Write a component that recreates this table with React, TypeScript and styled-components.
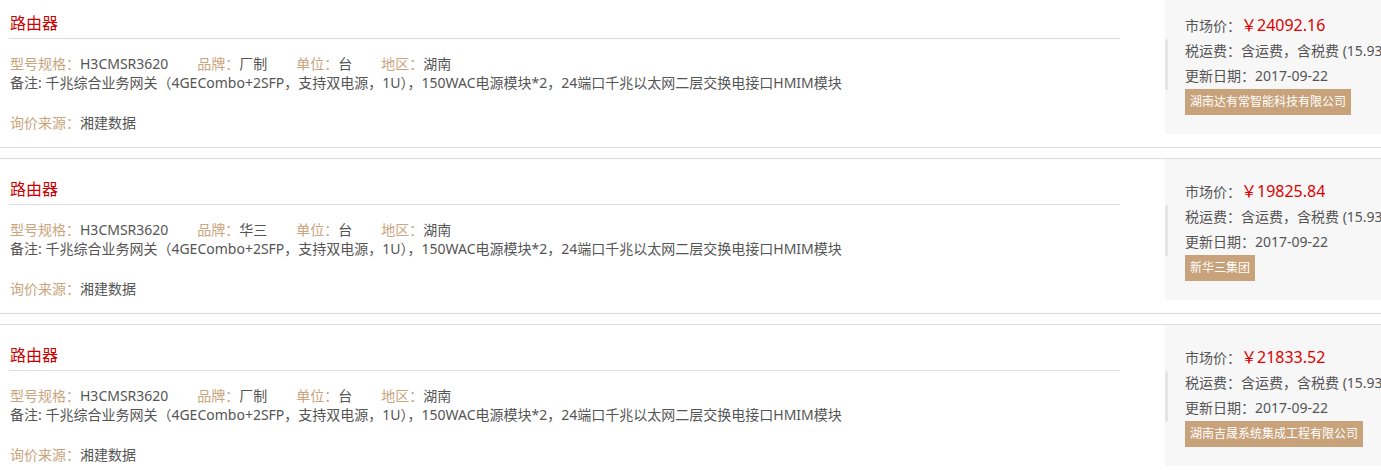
import styled, { createGlobalStyle } from "styled-components";

type Quote = {
  title: string;
  model: string;
  brand: string;
  unit: string;
  area: string;
  remark: string;
  source: string;
  price: string;
  tax: string;
  date: string;
  company: string;
};

const remark =
  "千兆综合业务网关（4GECombo+2SFP，支持双电源，1U），150WAC电源模块*2，24端口千兆以太网二层交换电接口HMIM模块";

const quotes: Quote[] = [
  {
    title: "路由器",
    model: "H3CMSR3620",
    brand: "厂制",
    unit: "台",
    area: "湖南",
    remark,
    source: "湘建数据",
    price: "24092.16",
    tax: "含运费，含税费 (15.93%)",
    date: "2017-09-22",
    company: "湖南达有常智能科技有限公司",
  },
  {
    title: "路由器",
    model: "H3CMSR3620",
    brand: "华三",
    unit: "台",
    area: "湖南",
    remark,
    source: "湘建数据",
    price: "19825.84",
    tax: "含运费，含税费 (15.93%)",
    date: "2017-09-22",
    company: "新华三集团",
  },
  {
    title: "路由器",
    model: "H3CMSR3620",
    brand: "厂制",
    unit: "台",
    area: "湖南",
    remark,
    source: "湘建数据",
    price: "21833.52",
    tax: "含运费，含税费 (15.93%)",
    date: "2017-09-22",
    company: "湖南吉晟系统集成工程有限公司",
  },
];

const GlobalStyle = createGlobalStyle`
  html, body {
    margin: 0;
    padding: 0;
    background: #fff;
    overflow: hidden;
  }
  body {
    font-family: "Noto Sans", "Noto Sans CJK SC", sans-serif;
    font-size: 14px;
    color: #555;
  }
`;

const List = styled.div`
  margin-top: -8px;
`;

const Item = styled.div`
  display: flex;
  height: 154px;
  border-top: 1px solid #ddd;
  border-bottom: 1px solid #ddd;
  margin-bottom: 10px;
`;

const Main = styled.div`
  width: 1111px;
  margin-left: 9px;
  margin-right: 45px;
  flex-shrink: 0;
`;

const Title = styled.h3`
  margin: 0;
  padding: 18px 0 3px 1px;
  line-height: 24px;
  font-size: 16px;
  font-weight: normal;
  color: #cc0000;
  border-bottom: 1px solid #ddd;
`;

const Row = styled.div<{ $gap?: number }>`
  margin-top: ${(p) => p.$gap ?? 0}px;
  padding-left: 1px;
  line-height: 19px;
  white-space: nowrap;
`;

const Field = styled.span`
  margin-right: 29px;
`;

const Label = styled.span`
  color: #c9a47d;
`;

const Side = styled.div`
  position: relative;
  flex: 1;
  min-width: 0;
  height: 141px;
  box-sizing: border-box;
  padding: 20px 0 0 20px;
  background: #f7f7f7;
  overflow: hidden;
  white-space: nowrap;
`;

const Scroll = styled.div`
  position: absolute;
  left: 0;
  top: 46px;
  width: 3px;
  height: 51px;
  border-radius: 2px;
  background: #e4e4e4;
`;

const Line = styled.div`
  line-height: 25px;
  color: #555;
`;

const Price = styled.span`
  font-size: 16px;
  color: #dd0000;
`;

const Tag = styled.span`
  display: inline-block;
  margin-top: 1px;
  height: 26px;
  line-height: 26px;
  padding: 0 5px;
  font-size: 12px;
  color: #fff;
  background: #c8a27a;
`;

function QuoteItem({ q }: { q: Quote }) {
  return (
    <Item>
      <Main>
        <Title>{q.title}</Title>
        <Row $gap={15}>
          <Field>
            <Label>型号规格：</Label>
            {q.model}
          </Field>
          <Field>
            <Label>品牌：</Label>
            {q.brand}
          </Field>
          <Field>
            <Label>单位：</Label>
            {q.unit}
          </Field>
          <Field>
            <Label>地区：</Label>
            {q.area}
          </Field>
        </Row>
        <Row>备注: {q.remark}</Row>
        <Row $gap={21}>
          <Label>询价来源：</Label>
          {q.source}
        </Row>
      </Main>
      <Side>
        <Scroll />
        <Line>
          市场价：<Price>￥{q.price}</Price>
        </Line>
        <Line>税运费：{q.tax}</Line>
        <Line>更新日期：{q.date}</Line>
        <Tag>{q.company}</Tag>
      </Side>
    </Item>
  );
}

export default function App() {
  return (
    <>
      <GlobalStyle />
      <List>
        {quotes.map((q, i) => (
          <QuoteItem key={i} q={q} />
        ))}
      </List>
    </>
  );
}
